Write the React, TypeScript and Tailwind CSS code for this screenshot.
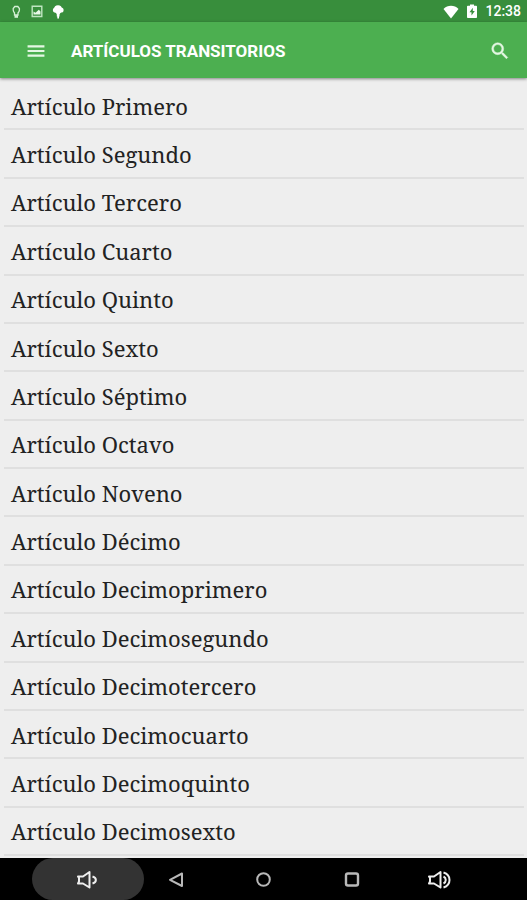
import React from 'react';

const articles = [
  'Primero',
  'Segundo',
  'Tercero',
  'Cuarto',
  'Quinto',
  'Sexto',
  'Séptimo',
  'Octavo',
  'Noveno',
  'Décimo',
  'Decimoprimero',
  'Decimosegundo',
  'Decimotercero',
  'Decimocuarto',
  'Decimoquinto',
  'Decimosexto',
];

const StatusBar: React.FC = () => (
  <div className="flex h-[22px] items-center justify-between bg-[#388e3c] pr-1.5 pl-2 text-white">
    {/* Notifications */}
    <div className="flex items-center gap-1">
      <svg className="size-4" viewBox="0 0 16 16" fill="none" stroke="#d5f0d6" strokeWidth="1.3">
        <path d="M6.500 12V10C5.600 8.800 5.200 8 5.200 7V5.500L6.800 3.500h3L11.400 5.500V7c0 1-.4 1.800-1.400 3v2z" />
        <path d="M6.500 13.500h3.500" strokeWidth="2.600" />
      </svg>
      <svg className="ml-px size-4" viewBox="0 0 16 16" fill="none" stroke="#bfe6c1" strokeWidth="1.4">
        <path d="M3.200 3.200h9.600v10.300H3.200z" />
        <path d="M4.500 11.500V8.500l2 1.300 3.300-3L11.500 8.500v3z" fill="#e8f8e8" stroke="none" />
      </svg>
      <svg className="ml-px size-4" viewBox="0 0 16 16" fill="#fff">
        <circle cx="8" cy="6.200" r="3.900" />
        <circle cx="5.500" cy="7" r="2.600" />
        <circle cx="11" cy="7" r="2.600" />
        <path d="M5.500 9h5.500l-1.500 2.500v2H9v2H7.300v-2h-.5v-2z" />
      </svg>
    </div>

    {/* System icons */}
    <div className="flex items-center gap-1">
      <svg className="size-4" viewBox="0 0 16 16" fill="#fff">
        <path d="M8 15.500.500 6C4.500 1.800 11.500 1.800 15.500 6z" />
      </svg>
      <svg className="mx-px size-4" viewBox="0 0 16 16" fill="#fff">
        <path
          fillRule="evenodd"
          d="M6 1.500h4v1.200h2.200c.4 0 .8.400.8.800v10.700c0 .4-.4.800-.8.800H3.800c-.4 0-.8-.4-.8-.8V3.500c0-.4.400-.8.800-.8H6zM8.800 4.700 5.500 9.300h2v3.200l3.300-4.600h-2z"
        />
      </svg>
      <span className="text-sm leading-5 font-medium">12:38</span>
    </div>
  </div>
);

const Toolbar: React.FC = () => (
  <header className="relative flex items-center bg-[#4caf50] px-4 pt-[17px] pb-[15px] text-white shadow-[0_1px_3px_rgba(0,0,0,0.45)]">
    <button type="button" aria-label="Menú" className="flex w-10 justify-center">
      <svg className="size-[22px]" viewBox="0 0 24 24" fill="#e4f7e3">
        <path d="M2.800 18.300h18.400v-2.400H2.800v2.400zm0-5.100h18.400v-2.400H2.800v2.400zm0-7.500v2.400h18.400V5.700H2.800z" />
      </svg>
    </button>
    <h1 className="ml-[15px] flex-1 text-[17px] leading-6 font-bold">ARTÍCULOS TRANSITORIOS</h1>
    <button type="button" aria-label="Buscar" className="flex w-[22px] justify-center">
      <svg className="size-[22px]" viewBox="0 0 24 24" fill="#e4f7e3" stroke="#e4f7e3" strokeWidth="0.5">
        <path d="M15.500 14h-.79l-.28-.27A6.470 6.470 0 0 0 16 9.500 6.500 6.500 0 1 0 9.500 16c1.610 0 3.090-.59 4.230-1.570l.27.280v.790l5 4.990L20.490 19l-4.990-5zm-6 0C7.010 14 5 11.990 5 9.500S7.010 5 9.500 5 14 7.010 14 9.500 11.990 14 9.500 14z" />
      </svg>
    </button>
  </header>
);

const NavButton: React.FC<{ label: string; active?: boolean; children: React.ReactNode }> = ({
  label,
  active,
  children,
}) => (
  <button type="button" aria-label={label} className="relative flex items-center justify-center pt-px">
    {/* Touch ripple */}
    {active && <span className="absolute -inset-x-3 inset-y-0 rounded-full bg-[#333]" />}
    <svg
      className="relative size-6"
      viewBox="0 0 24 24"
      fill="none"
      stroke="#b8b8b8"
      strokeWidth="2"
      strokeLinejoin="round"
    >
      {children}
    </svg>
  </button>
);

const NavigationBar: React.FC = () => (
  <nav className="bg-black">
    <div className="mx-auto grid h-[42px] w-5/6 grid-cols-5">
      <NavButton label="Bajar volumen" active>
        <path d="M2 8.500l1 1.500v3.500L2 15.500h5l6.500 4V4l-6.500 4.500z" stroke="#eee" />
        <path d="M16.500 8.500c4.500 1.500 4.500 5.500 0 7" stroke="#eee" />
      </NavButton>
      <NavButton label="Atrás">
        <path d="M18 5.500v12.500L6 11.800z" />
      </NavButton>
      <NavButton label="Inicio">
        <circle cx="12.500" cy="11.500" r="6.300" />
      </NavButton>
      <NavButton label="Recientes">
        <rect x="7" y="5.500" width="12" height="12" rx="2" strokeWidth="2.400" />
      </NavButton>
      <NavButton label="Subir volumen">
        <path d="M2 8.500l1 1.500v3.500L2 15.500h5l6.500 4V4l-6.500 4.500z" stroke="#eee" />
        <path d="M16.500 4.500c8 2.500 8 12.500 0 15M16.500 8.500c3 1.500 3 5.500 0 7" stroke="#eee" />
      </NavButton>
    </div>
  </nav>
);

const App: React.FC = () => {
  return (
    <div className="flex min-h-screen flex-col bg-[#eee] font-[Roboto,sans-serif]">
      <StatusBar />
      <Toolbar />

      {/* Article list */}
      <main className="flex flex-1 flex-col pt-1 pr-[3px] pb-0.5 pl-1">
        <ul className="grid flex-1 auto-rows-fr font-['Noto_Serif','DejaVu_Serif_Condensed','DejaVu_Serif',serif] text-[22px] leading-8 text-[#222]">
          {articles.map((name) => (
            <li key={name} className="flex min-h-12 items-center border-b-2 border-[#dfdfdf] px-[7px] pt-px">
              <a href="#">Artículo {name}</a>
            </li>
          ))}
        </ul>
      </main>

      <NavigationBar />
    </div>
  );
};

export default App;
